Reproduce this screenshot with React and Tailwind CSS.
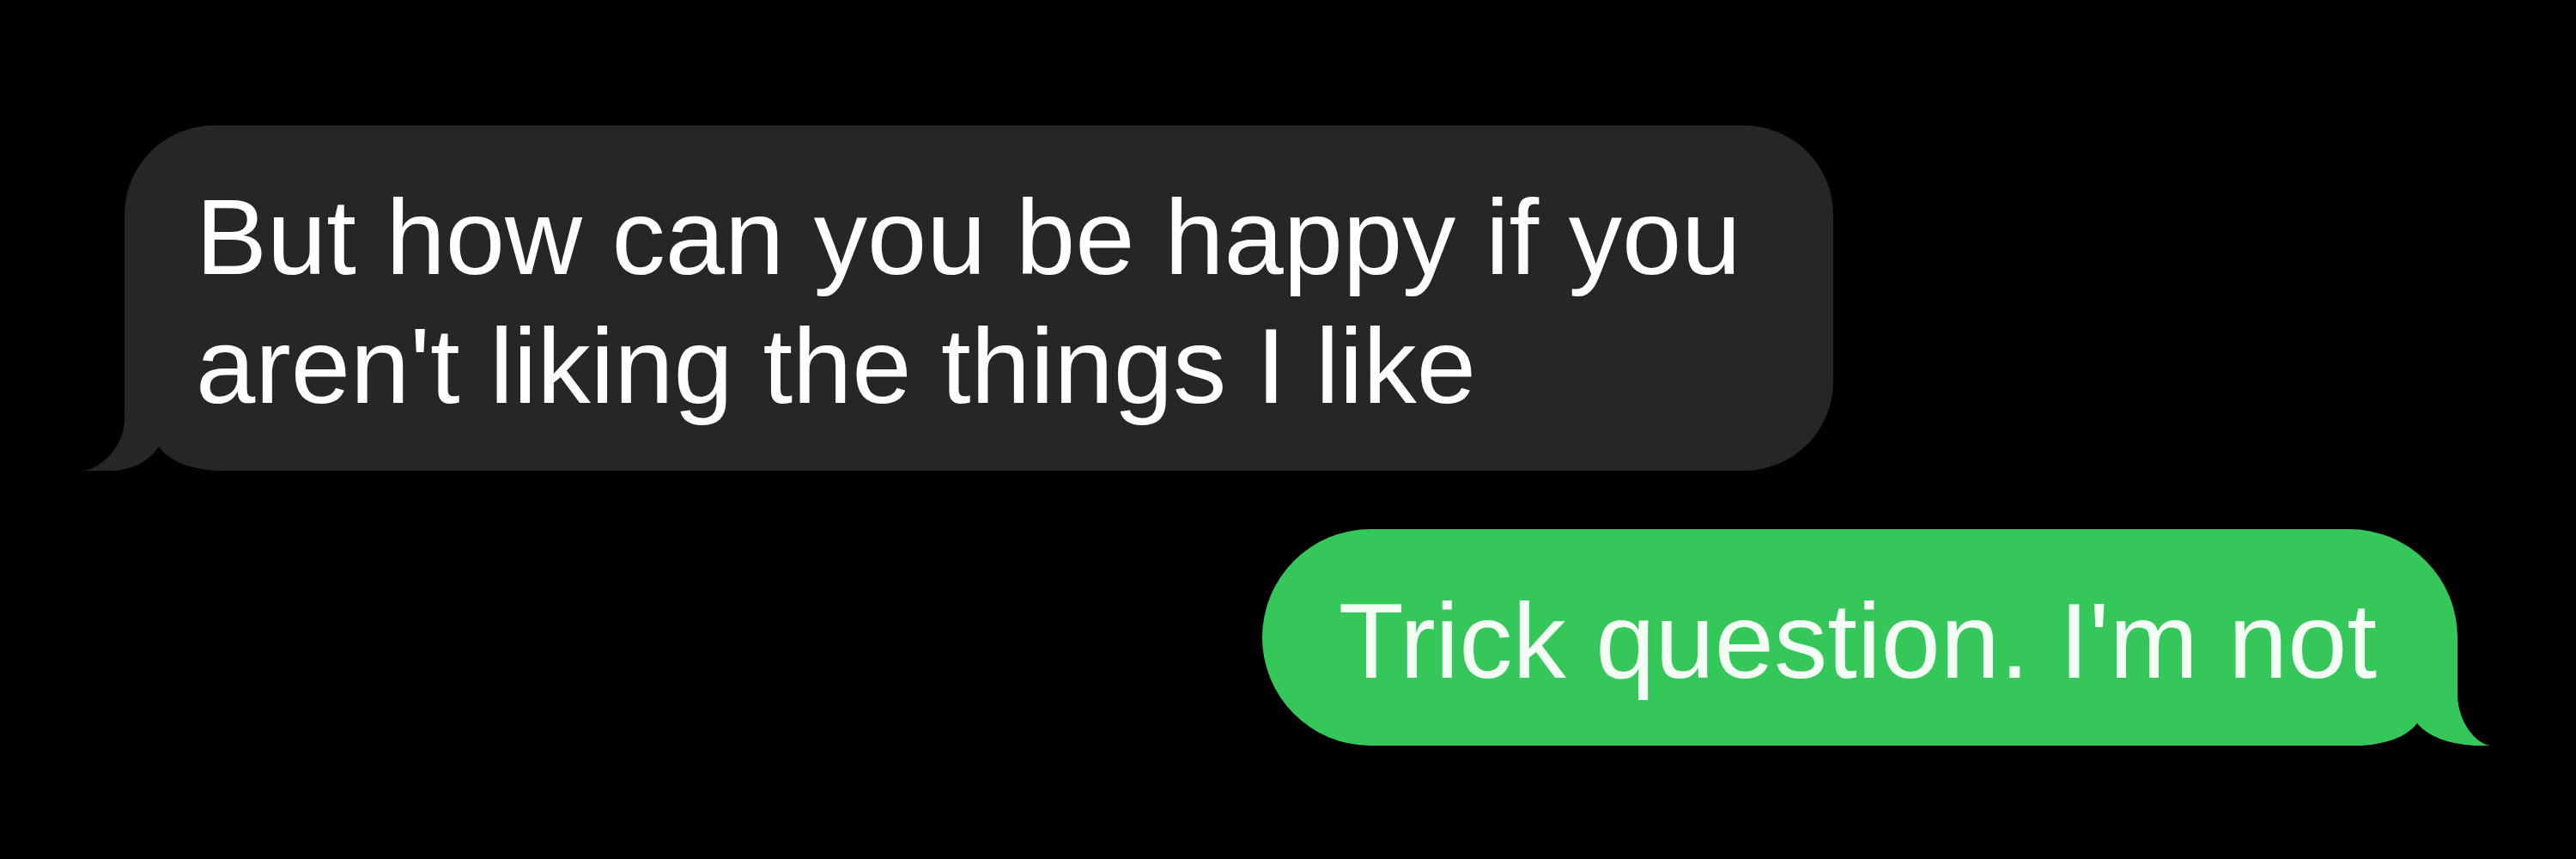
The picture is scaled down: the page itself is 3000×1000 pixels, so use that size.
const GrayTail = () => (
  <svg
    className="absolute left-[-50px] bottom-0 w-[180px] h-[80px]"
    viewBox="0 0 180 80"
  >
    {/* tail sweeping out to the left */}
    <path d="M50 0 L50 22 C49 52 23 77 3 80 L60 80 Z" fill="#262629" />
    {/* notch cut under the tail */}
    <path d="M38 80 Q73 77 90 52 Q108 77 158 80 Z" fill="#000000" />
  </svg>
);

const GreenTail = () => (
  <svg
    className="absolute right-[-40px] bottom-0 w-[180px] h-[80px]"
    viewBox="0 0 180 80"
  >
    <path d="M140 0 L140 22 C141 52 160 77 178 80 L120 80 Z" fill="#35c759" />
    <path d="M160 80 Q112 77 93 54 Q75 77 28 80 Z" fill="#000000" />
  </svg>
);

export default function App() {
  return (
    <div
      className="w-full h-[1000px] bg-black flex flex-col pt-[146px] overflow-hidden"
      style={{ fontFamily: '"Liberation Sans", Arial, sans-serif' }}
    >
      {/* incoming */}
      <div className="relative ml-[145px] w-[1990px] h-[402px] bg-[#262629] rounded-[104px] rounded-bl-none">
        <GrayTail />
        <div className="relative pl-[83px] pt-[55px] text-[124.5px] leading-[150px] text-white whitespace-nowrap">
          <div>But how can you be happy if you</div>
          <div>aren't liking the things I like</div>
        </div>
      </div>

      {/* outgoing */}
      <div className="self-end mr-[138px] mt-[68px] relative h-[252px] bg-[#35c759] rounded-[126px] rounded-br-none">
        <GreenTail />
        <div className="relative pl-[89px] pr-[94px] pt-[55px] text-[124.5px] leading-[150px] text-[#f3fff4] whitespace-nowrap">
          Trick question. I'm not
        </div>
      </div>
    </div>
  );
}
